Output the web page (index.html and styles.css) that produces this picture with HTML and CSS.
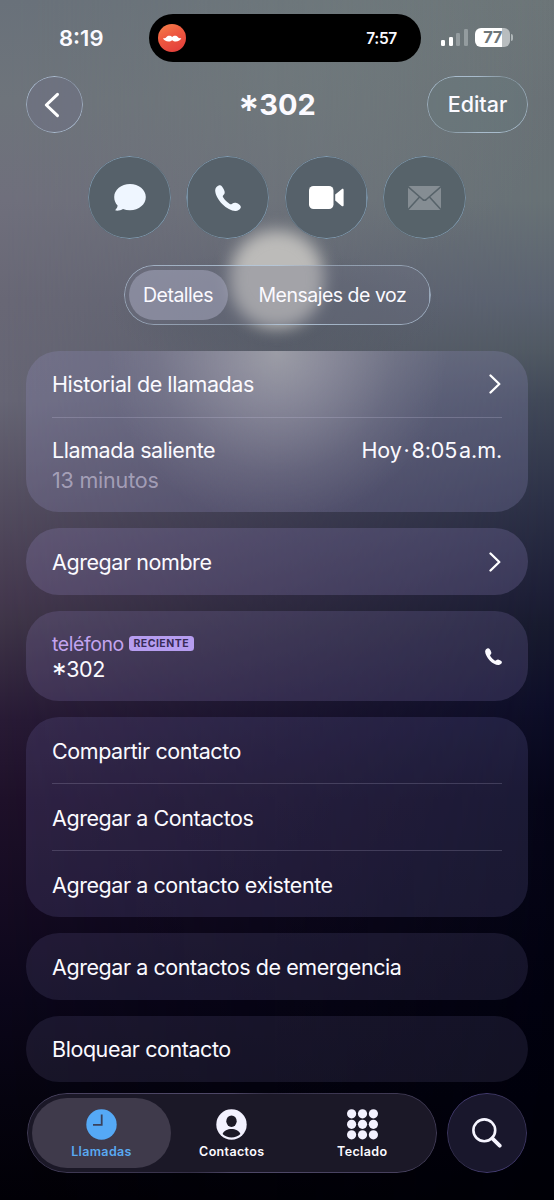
FILE: index.html
```html
<!DOCTYPE html>
<html lang="es">
<head>
<meta charset="utf-8">
<title>*302</title>
<link rel="stylesheet" href="styles.css">
</head>
<body>
<svg class="defs" width="0" height="0">
  <symbol id="handset" viewBox="0 0 26 26">
    <path d="M4.200.3C2.100.9.5 2.700.2 5-.1 8.800 3.100 14.800 7.200 19c4.500 4.500 9.600 7.100 13.400 6.900 2.300-.1 4.100-1.300 5-3 .5-1.200.1-2.200-.8-3-1.200-1-2.500-1.800-4-2.100-1.500-.3-2.600.2-3.700 1-.8.600-1.500.7-2.300.2C12.200 17.200 9.700 14.800 8.100 12.200c-.5-.8-.4-1.400.2-2 1.200-1.200 1.600-2.100 1.300-3.600C9.200 4.800 8.200 2.800 7 1.400 6.200.4 5.300 0 4.200.3Z" fill="currentColor"/>
  </symbol>
</svg>
<main class="screen">
  <div class="backdrop"></div>
  <div class="shade"></div>
  <div class="avatar-glow"></div>

  <div class="status">
    <span class="clock">8:19</span>
    <div class="island">
      <svg width="28" height="28" viewBox="0 0 28 28">
        <defs><linearGradient id="rd" x1="0" y1="0" x2=".5" y2="1"><stop offset="0" stop-color="#f5824a"/><stop offset=".5" stop-color="#ee5a40"/><stop offset="1" stop-color="#e5433c"/></linearGradient></defs>
        <circle cx="14" cy="14" r="14" fill="url(#rd)"/>
        <path d="M14.200 13C12.800 11.200 9.700 11.200 8.500 13 7.700 14.200 6.400 14.500 5 14c.8 3.200 6.500 4.600 9.200 2.200 2.700 2.400 8.300 1 9.100-2.200-1.400.5-2.700.2-3.500-1-1.200-1.800-4.200-1.800-5.600 0Z" fill="#fff"/>
      </svg>
      <span>7:57</span>
    </div>
    <div class="signals">
      <div class="bars"><i></i><i></i><i></i><i></i></div>
      <div class="battery"><b>77</b></div>
      <div class="nub"></div>
    </div>
  </div>

  <header class="head">
    <div class="round glass"><svg width="16" height="26" viewBox="0 0 16 26" fill="none" stroke="#fff" stroke-width="3" stroke-linecap="round" stroke-linejoin="round"><path d="M13.500 2.300 2.300 13l11.200 10.700"/></svg></div>
    <h1><span class="star">*</span>302</h1>
    <div class="edit glass">Editar</div>
  </header>

  <div class="actions">
    <div class="action glass"><svg width="32" height="27" viewBox="0 0 32 27"><path d="M16 0c8.800 0 15.800 5.700 15.800 13S25 26.200 16 26.200c-2.600 0-4.900-.4-7-1.200-1.900 1.100-4.700 1.900-7 1.600-.7-.1-.7-.7-.3-1.100 1.100-1.100 1.800-2.500 1.900-4C1.300 19.200.2 16.300.2 13 .2 5.700 7.200 0 16 0Z" fill="#eff6ff"/></svg></div>
    <div class="action glass call"><svg width="26" height="26"><use href="#handset"/></svg></div>
    <div class="action glass"><svg width="35" height="23" viewBox="0 0 35 23" fill="#fff"><rect width="24.500" height="23" rx="4.500"/><path d="M26.200 8.600 32.700 3.200c.9-.7 1.900-.4 1.900.7v15.300c0 1.100-1 1.400-1.900.7l-6.500-5.400Z"/></svg></div>
    <div class="action glass dim"><svg width="33" height="24" viewBox="0 0 33 24"><rect width="33" height="24" rx="1.500" fill="#858d93"/><path d="M0 .6 14.700 13.500q1.800 1.400 3.600 0L33 .6M0 23.600l11.300-12.400M33 23.600 21.700 11.200" fill="none" stroke="#57636a" stroke-width="1.600"/></svg></div>
  </div>

  <div class="segment glass"><span class="seg on">Detalles</span><span class="seg voice">Mensajes de voz</span></div>

  <div class="cards">
    <section class="card first">
      <div class="row"><span>Historial de llamadas</span><svg class="chev" viewBox="0 0 12 20"><path d="m1.500 1.500 8.800 8.500-8.800 8.500"/></svg></div>
      <div class="row tall">
        <div><div>Llamada saliente</div><div class="muted">13 minutos</div></div>
        <span class="when">Hoy&#8202;·&#8202;8:05&#8202;a.m.</span>
      </div>
    </section>
    <section class="card second"><div class="row"><span>Agregar nombre</span><svg class="chev" viewBox="0 0 12 20"><path d="m1.500 1.500 8.800 8.500-8.800 8.500"/></svg></div></section>
    <section class="card third">
      <div class="row phone">
        <div><div class="label"><span>teléfono</span><em>RECIENTE</em></div><div class="number"><span class="star">*</span>302</div></div>
        <svg class="mini" width="17" height="17"><use href="#handset"/></svg>
      </div>
    </section>
    <section class="card fourth">
      <div class="row"><span>Compartir contacto</span></div>
      <div class="row"><span>Agregar a Contactos</span></div>
      <div class="row"><span>Agregar a contacto existente</span></div>
    </section>
    <section class="card fifth"><div class="row"><span>Agregar a contactos de emergencia</span></div></section>
    <section class="card sixth"><div class="row"><span>Bloquear contacto</span></div></section>
  </div>

  <nav class="dock">
    <div class="tabs glass">
      <div class="tab on"><svg width="31" height="31" viewBox="0 0 31 31"><circle cx="15.500" cy="15.500" r="15.200" fill="#55a9f6"/><path d="M15.700 5.500v10.300H7" fill="none" stroke="#39415c" stroke-width="1.800"/></svg><span>Llamadas</span></div>
      <div class="tab"><svg width="31" height="31" viewBox="0 0 31 31"><circle cx="15.500" cy="15.500" r="15.200" fill="#f3f1ff"/><ellipse cx="15.500" cy="12.200" rx="5.200" ry="5.800" fill="#1c1927"/><path d="M6.600 24.900c1.300-2.900 4.900-4.800 8.900-4.800s7.600 1.900 8.900 4.800c-2.300 2.200-5.400 3.500-8.900 3.500s-6.600-1.300-8.900-3.500Z" fill="#1c1927"/></svg><span>Contactos</span></div>
      <div class="tab"><svg width="31" height="31" viewBox="0 0 31 31" fill="#f3f1ff"><circle cx="4.600" cy="4.800" r="4.600"/><circle cx="15.500" cy="4.800" r="4.600"/><circle cx="26.400" cy="4.800" r="4.600"/><circle cx="4.600" cy="15.300" r="4.600"/><circle cx="15.500" cy="15.300" r="4.600"/><circle cx="26.400" cy="15.300" r="4.600"/><circle cx="4.600" cy="25.800" r="4.600"/><circle cx="15.500" cy="25.800" r="4.600"/><circle cx="26.400" cy="25.800" r="4.600"/></svg><span>Teclado</span></div>
    </div>
    <div class="search glass"><svg width="30" height="30" viewBox="0 0 30 30" fill="none" stroke="#f6f5ff" stroke-linecap="round"><circle cx="12.300" cy="12.300" r="10.900" stroke-width="2.600"/><path d="m20.300 20.300 7.400 7.400" stroke-width="3.800"/></svg></div>
  </nav>
</main>
</body>
</html>
```

FILE: styles.css
```css
* { box-sizing: border-box; }
body { margin: 0; background: #02010a; }
.defs { display: block; position: absolute; }

.screen {
  position: relative;
  width: 554px;
  height: 1200px;
  overflow: hidden;
  color: #fbfaff;
  font-family: Inter, "Liberation Sans", sans-serif;
  font-size: 21.5px;
  background: linear-gradient(180deg, #6c7578 0, #697176 100px, #687276 200px, #5a6270 300px, #505963 350px, #404858 400px, #2c3147 500px, #1c1e36 595px, #171a2e 625px, #0d0e28 705px, #060618 800px, #02020f 1000px, #000007 1200px);
}
.backdrop, .avatar-glow, .shade { position: absolute; }
.backdrop {
  inset: 0;
  background: linear-gradient(180deg, #69717a 0, #6e747b 100px, #6f6f7c 200px, #686775 300px, #666574 400px, #544e60 500px, #45394f 595px, #3f3548 622px, #281a35 720px, #1e1029 800px, #150b22 900px, #0b061a 1000px, #05030f 1100px, #010006 1200px);
  -webkit-mask-image: linear-gradient(90deg, #000, transparent);
  mask-image: linear-gradient(90deg, #000, transparent);
}
.screen::before {
  content: "";
  position: absolute;
  inset: 0;
  background: radial-gradient(ellipse 300px 240px at 277px 50px, rgba(121,135,132,.5), transparent);
}
.shade {
  left: 110px;
  top: 250px;
  width: 334px;
  height: 120px;
  background: radial-gradient(closest-side, rgba(78,86,96,.45), rgba(78,86,96,.25) 60%, transparent);
}
.avatar-glow {
  left: 230px;
  top: 230px;
  width: 94px;
  height: 98px;
  border-radius: 46px;
  background: #bcbbb9;
  filter: blur(8px);
}

/* Thin, unevenly lit rim around translucent controls */
.glass { position: relative; }
.glass::before {
  content: "";
  position: absolute;
  inset: 0;
  padding: 1.4px;
  border-radius: inherit;
  background: conic-gradient(from 0deg, var(--rim), var(--soft) 12%, var(--rim) 35%, var(--rim) 50%, var(--soft) 63%, var(--rim) 84%, var(--rim));
  -webkit-mask: linear-gradient(#000 0 0) content-box exclude, linear-gradient(#000 0 0);
  mask: linear-gradient(#000 0 0) content-box exclude, linear-gradient(#000 0 0);
}
.glass { --rim: rgba(186,207,227,.78); --soft: rgba(186,207,227,.4); }

.status {
  position: relative;
  height: 76px;
  padding: 14px 0 0 59px;
  display: flex;
  align-items: flex-start;
}
.clock { width: 90px; font-weight: 600; font-size: 22px; line-height: 48px; }
.island {
  flex: none;
  width: 272px;
  height: 48px;
  padding: 0 24px 0 9px;
  border-radius: 24px;
  background: #000;
  display: flex;
  align-items: center;
  justify-content: space-between;
  font-size: 15.500px;
  font-weight: 600;
  letter-spacing: -.3px;
}
.signals { display: flex; margin-left: 20px; height: 47px; align-items: center; }
.bars { display: flex; align-items: flex-end; gap: 3.300px; height: 17px; margin-right: 7px; }
.bars i { width: 4.300px; height: 6px; border-radius: 1.300px; background: #fff; }
.bars i:nth-child(2) { height: 9px; }
.bars i:nth-child(3) { height: 13px; background: #949c9f; }
.bars i:nth-child(4) { height: 17px; background: #949c9f; }
.battery {
  width: 35px;
  height: 19px;
  border-radius: 6px;
  background: linear-gradient(90deg, #fff 77%, #b8bdbf 77%);
  color: #6d7679;
  text-align: center;
  font-size: 16.500px;
  line-height: 19px;
  letter-spacing: -.5px;
}
.battery b { font-weight: 700; }
.nub { width: 2px; height: 7px; margin-left: 1px; border-radius: 0 3px 3px 0; background: #afb6b8; }

.head {
  position: relative;
  height: 57px;
  padding: 0 26px;
  display: grid;
  grid-template-columns: 101px 1fr 101px;
  align-items: center;
}
.head h1 { margin: 0; text-align: center; font-size: 29px; font-weight: 700; line-height: 57px; }
.star { font-size: 1.35em; line-height: 0; vertical-align: -.24em; }
.head .star { font-weight: 600; }
.round { width: 57px; height: 57px; border-radius: 50%; background: rgba(112,113,138,.35); display: flex; align-items: center; padding-left: 18px; }
.edit { height: 57px; border-radius: 29px; line-height: 57px; text-align: center; background: rgba(100,124,128,.25); font-weight: 500; }

.actions { position: relative; display: flex; justify-content: center; gap: 15.300px; margin-top: 23px; }
.action { width: 83px; height: 83px; border-radius: 50%; background: #56616a; display: grid; place-items: center; color: #f0f7ff; --rim: rgba(137,166,190,.85); --soft: rgba(137,166,190,.4); }
.dim { background: #57636a; }

.segment {
  width: 307px;
  height: 60px;
  margin: 26px auto 0;
  padding: 5px;
  border-radius: 30px;
  background: rgba(112,115,134,.33);
  display: flex;
  font-size: 19.500px;
  line-height: 51px;
  letter-spacing: -.5px;
}
.seg.on { width: 99px; height: 50px; border-radius: 25px; background: rgba(158,160,181,.6); text-align: center; }
.voice { flex: 1; padding-left: 31px; white-space: nowrap; }

.cards { position: relative; padding: 0 26px; margin-top: 26px; display: flex; flex-direction: column; gap: 16px; letter-spacing: -.43px; }
.card { border-radius: 33px; padding: 0 26px; background: rgba(150,140,220,.15); white-space: nowrap; overflow: hidden; }
.row { height: 67px; display: flex; align-items: center; justify-content: space-between; }
.row + .row { border-top: 1.500px solid rgba(205,200,230,.24); }
.first {
  height: 161px;
  background:
    radial-gradient(ellipse 170px 175px at 251px 0, rgba(188,188,190,.62), rgba(182,180,188,.44) 30%, rgba(175,172,180,.15) 70%, transparent),
    rgba(158,154,205,.225);
}
.first .row:first-child { height: 65.500px; }
.first .tall { height: 94px; align-items: flex-start; padding-top: 17.500px; line-height: 30px; }
.muted { color: rgba(215,208,230,.58); letter-spacing: -.2px; }
.when { letter-spacing: -.1px; }
.second { height: 67px; background: rgba(158,145,210,.22); }
.third { height: 90px; background: rgba(158,145,215,.18); }
.third .row { height: 90px; }
.fourth { height: 200px; }
.fourth .row:first-child { height: 66px; padding-top: 1px; }
.fourth .row + .row { border-top-color: rgba(205,200,230,.2); padding-top: 1px; }
.fifth { height: 67px; background: rgba(155,145,215,.13); }
.sixth { height: 66px; background: rgba(155,145,215,.12); }
.sixth .row { height: 65px; }
.chev { width: 12px; height: 20px; margin-right: 1px; fill: none; stroke: #fff; stroke-width: 2.300; stroke-linecap: round; stroke-linejoin: round; }
.phone { line-height: 26px; }
.label { display: flex; align-items: center; gap: 5px; color: #c3a4ef; font-size: 19.500px; margin-top: 1px; }
.label em { width: 65px; height: 15px; border-radius: 3.500px; background: #b69df0; color: #392c57; text-align: center; font: 700 10.500px/15px Inter, sans-serif; letter-spacing: .5px; margin-top: -2px; }
.number { line-height: 25px; letter-spacing: -.4px; }

.dock { position: relative; display: flex; justify-content: space-between; padding: 0 27px; margin-top: 11px; }
.tabs, .search { height: 80px; border-radius: 40px; background: #1b1827; --rim: rgba(112,103,145,.6); --soft: rgba(90,82,118,.4); }
.tabs { width: 410px; padding: 5px; display: flex; }
.tab { width: 130.500px; height: 70px; padding-top: 10.500px; display: flex; flex-direction: column; align-items: center; font-size: 12.500px; font-weight: 600; }
.tab span { line-height: 16px; margin-top: 4px; letter-spacing: .35px; }
.tab.on { width: 139px; margin-right: -4.500px; border-radius: 35px; background: #3f3a4b; color: #59a9f2; }
.search { width: 80px; background: #19172c; display: grid; place-items: center; --rim: rgba(82,72,137,.75); }
```
